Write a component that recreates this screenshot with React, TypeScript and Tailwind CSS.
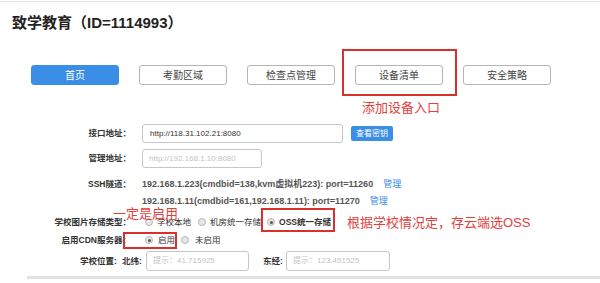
import React from "react";

function Radio({ checked }: { checked?: boolean }) {
  return (
    <span className="flex h-[8px] w-[8px] shrink-0 items-center justify-center rounded-full border border-[#b9b9b9] bg-[#e6e6e6]">
      {checked ? <span className="h-[3px] w-[3px] rounded-full bg-[#555]" /> : null}
    </span>
  );
}

function Label({ children }: { children: React.ReactNode }) {
  return (
    <div className="w-[131px] shrink-0 text-right text-[8.5px] font-bold leading-none text-[#333]">
      {children}
    </div>
  );
}

const tabs = ["首页", "考勤区域", "检查点管理", "设备清单", "安全策略"];

export default function App() {
  return (
    <div className="relative h-[283px] w-[600px] overflow-hidden bg-white font-['Liberation_Sans','Noto_Sans_CJK_SC',sans-serif] text-[#333]">
      <div className="mt-px h-px bg-[#e4e4e4]" />
      <h1 className="ml-[12px] mt-[10px] text-[15px] font-bold leading-[22px] text-[#222]">
        致学教育（ID=1114993）
      </h1>

      <div className="ml-[31px] mt-[31px] flex gap-[20px]">
        {tabs.map((t, i) => (
          <div
            key={t}
            className={
              i === 0
                ? "flex h-[20px] w-[88px] items-center justify-center rounded-[3px] border border-[#3a8ee6] bg-[#3a8ee6] text-[10px] text-white"
                : "flex h-[20px] w-[88px] items-center justify-center rounded-[3px] border border-[#b5b5b5] bg-white text-[10px] text-[#444]"
            }
          >
            {t}
          </div>
        ))}
      </div>

      <div className="mt-[39px] flex h-[19px] items-center">
        <Label>接口地址：</Label>
        <div className="ml-[11px] flex h-[19px] w-[201px] items-center rounded-[3px] border border-[#c6c6c6] px-[7px] text-[8px] text-[#333]">
          http://118.31.102.21:8080
        </div>
        <div className="ml-[8px] flex h-[15px] w-[42px] items-center justify-center rounded-[2px] bg-[#3a8ee6] text-[8px] text-white">
          查看密钥
        </div>
      </div>

      <div className="mt-[6px] flex h-[19px] items-center">
        <Label>管理地址：</Label>
        <div className="ml-[11px] flex h-[19px] w-[120px] items-center rounded-[3px] border border-[#c6c6c6] px-[6px] text-[8px] text-[#c4c4c4]">
          http://192.168.1.10:8080
        </div>
      </div>

      <div className="mt-[8px] flex items-start">
        <div className="flex h-[17px] items-center">
          <Label>SSH隧道：</Label>
        </div>
        <div className="ml-[11px] text-[9px] font-bold leading-[17px] text-[#555]">
          <div>
            192.168.1.223(cmdbid=138,kvm虚拟机223): port=11260
            <span className="ml-[10px] font-normal text-[#3a8ee6]">管理</span>
          </div>
          <div>
            192.168.1.11(cmdbid=161,192.168.1.11): port=11270
            <span className="ml-[10px] font-normal text-[#3a8ee6]">管理</span>
          </div>
        </div>
      </div>

      <div className="mt-[3px] flex h-[18px] items-center">
        <Label>学校图片存储类型：</Label>
        <div className="ml-[14px] flex items-center text-[8.5px] leading-none text-[#333]">
          <Radio />
          <span className="ml-[4px]">学校本地</span>
          <span className="ml-[7px]">
            <Radio />
          </span>
          <span className="ml-[4px]">机房统一存储</span>
          <span className="ml-[6px]">
            <Radio checked />
          </span>
          <span className="ml-[4px] font-bold">OSS统一存储</span>
        </div>
      </div>

      <div className="flex h-[18px] items-center">
        <Label>启用CDN服务器：</Label>
        <div className="ml-[14px] flex items-center text-[8.5px] leading-none text-[#333]">
          <Radio checked />
          <span className="ml-[5px]">启用</span>
          <span className="ml-[6px]">
            <Radio />
          </span>
          <span className="ml-[6px]">未启用</span>
        </div>
      </div>

      <div className="mt-[2px] flex h-[20px] items-center pl-[80px] text-[8.5px] font-bold leading-none text-[#333]">
        <span className="w-[42px]">学校位置:</span>
        <span className="w-[24px]">北纬:</span>
        <div className="flex h-[20px] w-[103px] items-center rounded-[3px] border border-[#c6c6c6] px-[6px] text-[8px] font-normal text-[#c4c4c4]">
          提示：41.715925
        </div>
        <span className="ml-[14px] w-[23px]">东经:</span>
        <div className="flex h-[20px] w-[104px] items-center rounded-[3px] border border-[#c6c6c6] px-[6px] text-[8px] font-normal text-[#c4c4c4]">
          提示：123.451525
        </div>
      </div>

      <div className="ml-[27px] mt-[5px] h-[3px] bg-[#e2e2e2]" />

      {/* annotations */}
      <div className="absolute left-[342px] top-[49px] h-[47px] w-[115px] border-2 border-[#d9302c]" />
      <div className="absolute left-[362px] top-[101px] text-[13px] leading-none text-[#e2403a]">
        添加设备入口
      </div>
      <div className="absolute left-[113px] top-[207px] text-[13px] leading-none text-[#e2403a]">
        一定是启用
      </div>
      <div className="absolute left-[261px] top-[208px] h-[24px] w-[74px] border-2 border-[#d9302c]" />
      <div className="absolute left-[347px] top-[216px] text-[13px] leading-none text-[#e2403a]">
        根据学校情况定，存云端选OSS
      </div>
      <div className="absolute left-[123px] top-[232px] h-[17px] w-[54px] border-2 border-[#d9302c]" />
    </div>
  );
}
